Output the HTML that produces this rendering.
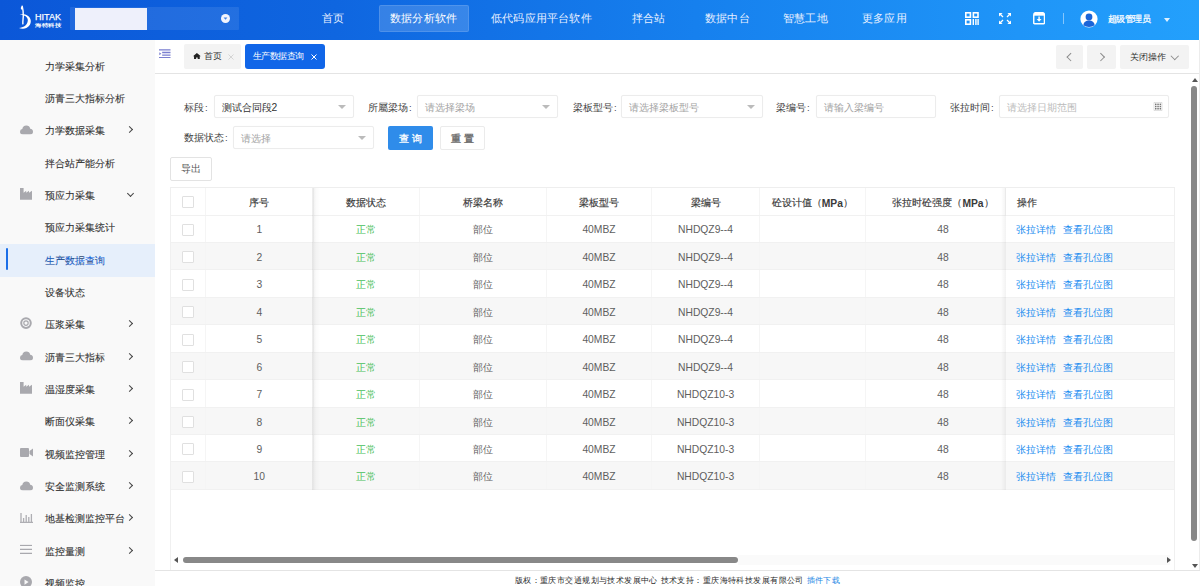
<!DOCTYPE html>
<html><head><meta charset="utf-8">
<style>
*{box-sizing:border-box;margin:0;padding:0}
html,body{width:1200px;height:586px;overflow:hidden;background:#fff;font-family:"Liberation Sans",sans-serif;color:#333}
.abs{position:absolute}
#hdr{position:absolute;left:0;top:0;width:1199px;height:40px;background:linear-gradient(90deg,#0b57d8 0%,#0f66e0 28%,#1680ee 58%,#1f95f8 85%,#23a0fc 100%)}
#side{position:absolute;left:0;top:40px;width:156px;height:546px;background:#f9f9f9;border-right:1px solid #e3e3e3;overflow:hidden}
#tabs{position:absolute;left:155px;top:40px;width:1045px;height:34px;background:#fff;border-bottom:1px solid #e4e4e4}
#main{position:absolute;left:155px;top:74px;width:1045px;height:496px;background:#fff}
#foot{position:absolute;left:155px;top:570px;width:1045px;height:16px;background:#fff;border-top:1px solid #e4e4e4;font-size:8.4px;letter-spacing:0.42px;color:#2a2a2a;text-align:center;line-height:18px;padding-left:0;white-space:nowrap}
.nav{position:absolute;top:0;height:40px;line-height:37px;color:#e8f0ff;font-size:11.3px;letter-spacing:0.2px;white-space:nowrap}
.mi{position:absolute;left:0;width:155px;height:32.33px;font-size:10px;color:#333;line-height:32px}
.mi span.t{position:absolute;left:45px;top:0.5px;-webkit-text-stroke:0.1px #333}
.mi .arr{position:absolute;left:127px;top:12.5px;width:5px;height:5px;border-right:1.5px solid #444;border-bottom:1.5px solid #444;transform:rotate(-45deg)}
.lbl{position:absolute;font-size:9.5px;color:#444;line-height:12px;white-space:nowrap}
.lbl b{font-weight:normal;margin-left:1px}
.inp{position:absolute;height:23px;border:1px solid #ececec;border-radius:2px;background:#fff;font-size:9.5px;color:#a3a3a3;line-height:23.5px;padding-left:6.5px;box-shadow:0 0 1px rgba(0,0,0,0.04);white-space:nowrap}
.inp .dd{position:absolute;right:7px;top:9px;width:0;height:0;border-left:4px solid transparent;border-right:4px solid transparent;border-top:4px solid #bbb}

.mi .ic{position:absolute;left:20px;top:50%;transform:translateY(-66%)}
.mi.act{background:#e6effb;color:#1a6ee8}
.mi.act:before{content:"";position:absolute;left:5.5px;top:4px;width:2px;height:22px;background:#1a6ee8;border-radius:1px}
.mi .arr.dn{left:128px;top:11px;transform:rotate(45deg)}

.row{position:absolute;left:0;width:1005px;border-bottom:1px solid #f1f1f1}
.row.odd{background:#f7f7f7}
.row.hd{color:#444;font-weight:500}
.cell{position:absolute;top:0;height:100%;padding-top:2px;border-right:1px solid #f5f5f5;text-align:center;font-size:9.5px;color:#5e5e5e;display:flex;align-items:center;justify-content:center;white-space:nowrap}
.hd .cell{color:#3a3a3a;padding-top:3px;-webkit-text-stroke:0.15px #3a3a3a}
.cell.lk{justify-content:flex-start;color:#1a8cf0}
.hd .cell[style*="text-align:left"]{justify-content:flex-start}
.hd .cb{position:relative;top:-1.5px}
.hd .cell .m{font-size:10.3px;font-weight:bold;-webkit-text-stroke:0;position:relative;top:-0.3px}
.cell.ok{color:#48c05a}
.cell{padding-top:4.5px}
.cell .n{font-size:10.3px;position:relative;top:-1px}
.hd .cell{padding-top:5px}
.row:not(.hd) .cb{position:relative;top:-1px}

.cb{display:block;width:12px;height:12px;border:1px solid #e0e0e0;border-radius:1px;background:#fff}
table{border-collapse:collapse;table-layout:fixed}
</style></head><body>
<div id="hdr">
  <!-- logo -->
  <div class="abs" style="left:70px;top:7px;width:169px;height:23px;background:rgba(255,255,255,0.09);border-radius:1px"></div>
  <div class="abs" style="left:75px;top:8px;width:72px;height:22px;background:#eef0fb"></div>
  <svg class="abs" style="left:220.6px;top:14.2px" width="9" height="9" viewBox="0 0 9 9"><circle cx="4.5" cy="4.5" r="4.5" fill="#f2f5fd"/><path d="M2.6 3.6 H6.4 L4.5 5.8Z" fill="#3d7fe6"/></svg>
  <div class="nav" style="left:322px">首页</div>
  <div class="abs" style="left:379px;top:5px;width:90px;height:27px;background:rgba(255,255,255,0.16);border-radius:2px;border:1px solid rgba(255,255,255,0.12)"></div>
  <div class="nav" style="left:390px;color:#fff">数据分析软件</div>
  <div class="nav" style="left:491px">低代码应用平台软件</div>
  <div class="nav" style="left:632px">拌合站</div>
  <div class="nav" style="left:705px">数据中台</div>
  <div class="nav" style="left:783px">智慧工地</div>
  <div class="nav" style="left:862px">更多应用</div>
  <div class="nav" style="left:1107.5px;top:0.5px;font-size:9px;letter-spacing:-0.4px;-webkit-text-stroke:0.25px #fff;color:#fff">超级管理员</div>
  <svg class="abs" style="left:17px;top:5px" width="48" height="27" viewBox="0 0 48 27">
    <path d="M5.2 1.2 C5.9 4 6.4 7 6.3 11 C6.2 14 5.6 16.5 5.9 18.8" stroke="#fff" stroke-width="1.4" fill="none" stroke-linecap="round"/>
    <path d="M5 1 C3.6 2.3 3.3 3.6 4.6 4.8 C5.6 3.8 5.8 2.4 5 1Z" fill="#fff"/>
    <path d="M2.6 9.6 C7 8.4 12.8 10 13.7 15 C14.5 19.6 11 23.6 6 23.7 C4.6 23.8 3 23.5 2 23 C6.2 22.6 10.4 20.4 10.8 15.8 C11.1 12 7.6 10.1 2.6 9.6Z" fill="#fff"/>
    <text x="18" y="15.4" font-family="Liberation Sans" font-size="9.6" stroke="#fff" stroke-width="0.25" fill="#fff" textLength="26" lengthAdjust="spacingAndGlyphs">HITAK</text>
    <text x="18" y="21.8" font-size="5" fill="#fff" font-weight="bold" textLength="26" lengthAdjust="spacingAndGlyphs">海特科技</text>
  </svg>
  <svg class="abs" style="left:965px;top:12px" width="14" height="13" viewBox="0 0 14 13">
    <g fill="none" stroke="#fff" stroke-width="1.6"><rect x="0.8" y="0.8" width="4.6" height="4.4"/><rect x="8.4" y="0.8" width="4.6" height="4.4"/><rect x="0.8" y="7.8" width="4.6" height="4.4"/></g>
    <g fill="#fff"><rect x="7.6" y="7" width="1.4" height="6"/><rect x="10.2" y="7" width="1.4" height="6"/><rect x="12.4" y="7" width="1.4" height="6"/></g>
  </svg>
  <svg class="abs" style="left:999px;top:13px" width="12" height="11" viewBox="0 0 12 11">
    <g fill="#fff"><path d="M0 0 H3.6 L0 3.6Z"/><path d="M12 0 H8.4 L12 3.6Z"/><path d="M0 11 H3.6 L0 7.4Z"/><path d="M12 11 H8.4 L12 7.4Z"/></g>
    <g stroke="#fff" stroke-width="1.3"><path d="M1 1 L4 4"/><path d="M11 1 L8 4"/><path d="M1 10 L4 7"/><path d="M11 10 L8 7"/></g>
  </svg>
  <svg class="abs" style="left:1032.8px;top:12.3px" width="12.2" height="12.6" viewBox="0 0 13 13" preserveAspectRatio="none">
    <path d="M0.8 3.2 Q0.8 0.6 3.4 0.6 H9.6 Q12.2 0.6 12.2 3.2 V11.3 Q12.2 12.2 11.3 12.2 H1.7 Q0.8 12.2 0.8 11.3 Z" fill="none" stroke="#fff" stroke-width="1.5"/>
    <rect x="1" y="1" width="11" height="2.8" fill="#fff"/>
    <path d="M6.5 4.6 V8" stroke="#fff" stroke-width="1.5"/>
    <path d="M3.9 7.1 H9.1 L6.5 10.1Z" fill="#fff"/>
  </svg>
  <div class="abs" style="left:1062.5px;top:13px;width:1px;height:11px;background:rgba(255,255,255,0.45)"></div>
  <svg class="abs" style="left:1080px;top:10px" width="18" height="18" viewBox="0 0 18 18">
    <circle cx="9" cy="9" r="8.6" fill="#fff"/>
    <circle cx="9" cy="7" r="3.4" fill="#1a64d8"/>
    <path d="M3.3 15.2 Q4 10.6 9 10.6 Q14 10.6 14.7 15.2 Q12.3 17 9 17 Q5.7 17 3.3 15.2Z" fill="#1a64d8"/>
  </svg>
  <div class="abs" style="left:1164px;top:17.5px;width:0;height:0;border-left:3.5px solid transparent;border-right:3.5px solid transparent;border-top:4px solid rgba(255,255,255,0.85)"></div>

</div>
<div id="side">
<div class="mi" style="top:10.30px"><span class="t">力学采集分析</span></div>
<div class="mi" style="top:42.63px"><span class="t">沥青三大指标分析</span></div>
<div class="mi" style="top:74.96px"><svg class="ic" width="13" height="10" viewBox="0 0 13 10"><path d="M3 10 Q0 10 0 7.3 Q0 5 2.3 4.7 Q2.8 1 6.3 1 Q9.6 1 10.2 4.3 Q13 4.6 13 7.3 Q13 10 10 10 Z" fill="#a9a9ae"/></svg><span class="t">力学数据采集</span><i class="arr"></i></div>
<div class="mi" style="top:107.29px"><span class="t">拌合站产能分析</span></div>
<div class="mi" style="top:139.62px"><svg class="ic" width="12" height="12" viewBox="0 0 12 12"><path d="M0 0 H3.6 V4.6 L6.2 2.6 V4.6 L9 2.6 V4.6 L12 2.6 V11.6 H0 Z" fill="#a9a9ae"/></svg><span class="t">预应力采集</span><i class="arr dn"></i></div>
<div class="mi" style="top:171.95px"><span class="t">预应力采集统计</span></div>
<div class="mi act" style="top:204.28px"><span class="t">生产数据查询</span></div>
<div class="mi" style="top:236.61px"><span class="t">设备状态</span></div>
<div class="mi" style="top:268.94px"><svg class="ic" width="12" height="12" viewBox="0 0 12 12"><circle cx="6" cy="6" r="4.8" fill="none" stroke="#a9a9ae" stroke-width="2"/><circle cx="6" cy="6" r="2.2" fill="none" stroke="#a9a9ae" stroke-width="1.2"/></svg><span class="t">压浆采集</span><i class="arr"></i></div>
<div class="mi" style="top:301.27px"><svg class="ic" width="13" height="10" viewBox="0 0 13 10"><path d="M3 10 Q0 10 0 7.3 Q0 5 2.3 4.7 Q2.8 1 6.3 1 Q9.6 1 10.2 4.3 Q13 4.6 13 7.3 Q13 10 10 10 Z" fill="#a9a9ae"/></svg><span class="t">沥青三大指标</span><i class="arr"></i></div>
<div class="mi" style="top:333.60px"><svg class="ic" width="12" height="12" viewBox="0 0 12 12"><path d="M0 0 H3.6 V4.6 L6.2 2.6 V4.6 L9 2.6 V4.6 L12 2.6 V11.6 H0 Z" fill="#a9a9ae"/></svg><span class="t">温湿度采集</span><i class="arr"></i></div>
<div class="mi" style="top:365.93px"><span class="t">断面仪采集</span><i class="arr"></i></div>
<div class="mi" style="top:398.26px"><svg class="ic" width="13" height="10" viewBox="0 0 13 10"><rect x="0" y="0.5" width="9" height="9" rx="1" fill="#a9a9ae"/><path d="M9.5 3.5 L13 1 V9 L9.5 6.5Z" fill="#a9a9ae"/></svg><span class="t">视频监控管理</span><i class="arr"></i></div>
<div class="mi" style="top:430.59px"><svg class="ic" width="13" height="10" viewBox="0 0 13 10"><path d="M3 10 Q0 10 0 7.3 Q0 5 2.3 4.7 Q2.8 1 6.3 1 Q9.6 1 10.2 4.3 Q13 4.6 13 7.3 Q13 10 10 10 Z" fill="#a9a9ae"/></svg><span class="t">安全监测系统</span><i class="arr"></i></div>
<div class="mi" style="top:462.92px"><svg class="ic" width="13" height="12" viewBox="0 0 13 12"><path d="M1 2 V11 M3.6 7 V11 M6.2 4 V11 M8.8 6 V11 M11.4 3 V11 M0 11.4 H13" stroke="#aeaeb3" stroke-width="1.3"/></svg><span class="t">地基检测监控平台</span><i class="arr"></i></div>
<div class="mi" style="top:495.25px"><svg class="ic" width="12" height="10" viewBox="0 0 12 10"><path d="M0 1 H12 M0 5 H12 M0 9 H12" stroke="#a9a9ae" stroke-width="1.4"/></svg><span class="t">监控量测</span><i class="arr"></i></div>
<div class="mi" style="top:527.58px"><svg class="ic" width="12" height="12" viewBox="0 0 12 12"><circle cx="6" cy="6" r="6" fill="#a9a9ae"/><path d="M4.5 3.3 L8.6 6 L4.5 8.7Z" fill="#f8f8f8"/></svg><span class="t">视频监控</span></div>
</div>
<div id="tabs">
  <svg class="abs" style="left:4.3px;top:8.8px" width="11.5" height="9.6" viewBox="0 0 12 10" preserveAspectRatio="none"><path d="M0 0.9 H12 M3.3 3.6 H12 M3.3 6.4 H12 M0 9.1 H12" stroke="#7a7ed0" stroke-width="1.5"/><path d="M0.3 3.4 L2.4 5 L0.3 6.6Z" fill="#7a7ed0"/></svg>
  <div class="abs" style="left:29px;top:4px;width:57px;height:25px;background:#f3f3f3;border-radius:2px"></div>
  <svg class="abs" style="left:37.8px;top:12.5px" width="7.8" height="6.6" viewBox="0 0 9 8" preserveAspectRatio="none"><path d="M4.5 0 L9 4 H7.8 V8 H5.4 V5.5 H3.6 V8 H1.2 V4 H0 Z" fill="#222"/></svg>
  <div class="abs" style="left:49px;top:4px;font-size:9px;letter-spacing:-0.5px;line-height:25px;color:#333">首页</div>
  <svg class="abs" style="left:73px;top:14px" width="6" height="6" viewBox="0 0 6 6"><path d="M0.5 0.5 L5.5 5.5 M5.5 0.5 L0.5 5.5" stroke="#d0d0d0" stroke-width="0.9"/></svg>
  <div class="abs" style="left:90px;top:4px;width:80px;height:25px;background:#1166e8;border-radius:3px"></div>
  <div class="abs" style="left:98px;top:4px;font-size:9px;letter-spacing:-0.55px;line-height:25px;color:#fff">生产数据查询</div>
  <svg class="abs" style="left:155.5px;top:14px" width="6" height="6" viewBox="0 0 6 6"><path d="M0.5 0.5 L5.5 5.5 M5.5 0.5 L0.5 5.5" stroke="#fff" stroke-width="1"/></svg>
  <div class="abs" style="left:900.5px;top:4.5px;width:27px;height:24px;background:#f3f3f3;border-radius:2px"></div>
  <div class="abs" style="left:932px;top:4.5px;width:29px;height:24px;background:#f3f3f3;border-radius:2px"></div>
  <div class="abs" style="left:965px;top:4.5px;width:69px;height:24px;background:#f3f3f3;border-radius:2px"></div>
  <div class="abs" style="left:912.5px;top:14px;width:5.5px;height:5.5px;border-left:1.5px solid #8a8a8a;border-bottom:1.5px solid #8a8a8a;transform:rotate(45deg)"></div>
  <div class="abs" style="left:942.5px;top:14px;width:5.5px;height:5.5px;border-right:1.5px solid #8a8a8a;border-top:1.5px solid #8a8a8a;transform:rotate(45deg)"></div>
  <div class="abs" style="left:975px;top:4.5px;font-size:9px;letter-spacing:-0.1px;line-height:25px;color:#333">关闭操作</div>
  <div class="abs" style="left:1016.5px;top:12.5px;width:5.5px;height:5.5px;border-right:1.3px solid #8a8a8a;border-bottom:1.3px solid #8a8a8a;transform:rotate(45deg)"></div>
</div>
<div id="main">
</div>

<div class="lbl" style="left:184px;top:102px">标段<b>:</b></div>
<div class="inp" style="left:214px;top:95px;width:140px;color:#333">测试合同段<span style="font-size:10.3px">2</span><i class="dd"></i></div>
<div class="lbl" style="left:368px;top:102px">所屬梁场<b>:</b></div>
<div class="inp" style="left:417px;top:95px;width:141px">请选择梁场<i class="dd"></i></div>
<div class="lbl" style="left:573px;top:102px">梁板型号<b>:</b></div>
<div class="inp" style="left:621px;top:95px;width:142px">请选择梁板型号<i class="dd"></i></div>
<div class="lbl" style="left:776px;top:102px">梁编号<b>:</b></div>
<div class="inp" style="left:816px;top:95px;width:120px">请输入梁编号</div>
<div class="lbl" style="left:950px;top:102px">张拉时间<b>:</b></div>
<div class="inp" style="left:999px;top:95px;width:170px;color:#bbb">请选择日期范围
<svg style="position:absolute;right:5px;top:6px" width="10" height="9" viewBox="0 0 9 9"><path d="M0.5 0.5H8.5V8.5H0.5Z" fill="none" stroke="#ccc" stroke-width="0.6"/><g fill="#777"><rect x="1.5" y="1.6" width="1.5" height="1.5"/><rect x="3.8" y="1.6" width="1.5" height="1.5"/><rect x="6.1" y="1.6" width="1.5" height="1.5"/><rect x="1.5" y="3.8" width="1.5" height="1.5"/><rect x="3.8" y="3.8" width="1.5" height="1.5"/><rect x="6.1" y="3.8" width="1.5" height="1.5"/><rect x="1.5" y="6" width="1.5" height="1.5"/><rect x="3.8" y="6" width="1.5" height="1.5"/><rect x="6.1" y="6" width="1.5" height="1.5"/></g></svg></div>
<div class="lbl" style="left:184px;top:132px">数据状态<b>:</b></div>
<div class="inp" style="left:233px;top:126px;width:141px">请选择<i class="dd"></i></div>
<div class="abs" style="left:388px;top:126px;width:45px;height:24px;background:#2f8cea;border-radius:2px;color:#fff;font-size:9.5px;line-height:26px;text-align:center;-webkit-text-stroke:0.3px #fff">查 询</div>
<div class="abs" style="left:440px;top:126px;width:45px;height:24px;background:#fff;border:1px solid #e3e3e3;border-radius:2px;color:#6a6a6a;font-size:9.5px;line-height:24px;text-align:center;-webkit-text-stroke:0.35px #6a6a6a;border-color:#ebebeb">重 置</div>
<div class="abs" style="left:170px;top:157px;width:42px;height:24px;background:#fff;border:1px solid #e3e3e3;border-radius:2px;color:#555;font-size:9.5px;line-height:22px;text-align:center">导出</div>

<div id="tbl" class="abs" style="left:170px;top:187px;width:1005px;height:383px;border-top:1px solid #eeeeee;border-left:1px solid #f0f0f0;border-right:1px solid #f0f0f0;background:#fff;overflow:hidden">
<div class="row hd" style="top:0;height:27.5px">
<div class="cell" style="left:0px;width:35px"><i class="cb"></i></div>
<div class="cell" style="left:35px;width:107.5px">序号</div>
<div class="cell" style="left:142.5px;width:106.5px">数据状态</div>
<div class="cell" style="left:249px;width:126.75px">桥梁名称</div>
<div class="cell" style="left:375.75px;width:105.5px">梁板型号</div>
<div class="cell" style="left:481.25px;width:107.5px">梁编号</div>
<div class="cell" style="left:588.75px;width:106.25px">砼设计值（<span class="m">MPa</span>）</div>
<div class="cell" style="left:695px;width:140px;padding-left:15px">张拉时砼强度（<span class="m">MPa</span>）</div>
<div class="cell" style="left:835px;width:170px;text-align:left;padding-left:11px">操作</div>
</div>
<div class="row" style="top:27.50px;height:27.44px">
<div class="cell" style="left:0px;width:35px"><i class="cb"></i></div>
<div class="cell" style="left:35px;width:107.5px"><span class="n">1</span></div>
<div class="cell ok" style="left:142.5px;width:106.5px">正常</div>
<div class="cell" style="left:249px;width:126.75px">部位</div>
<div class="cell" style="left:375.75px;width:105.5px" ><span class="n">40MBZ</span></div>
<div class="cell" style="left:481.25px;width:107.5px" ><span class="n">NHDQZ9--4</span></div>
<div class="cell" style="left:588.75px;width:106.25px"></div>
<div class="cell" style="left:695px;width:154px;border-right:none"><span class="n">48</span></div>
<div class="cell lk" style="left:835px;width:170px;text-align:left;padding-left:10px">张拉详情<span style="margin-left:7px">查看孔位图</span></div>
</div>
<div class="row odd" style="top:54.94px;height:27.44px">
<div class="cell" style="left:0px;width:35px"><i class="cb"></i></div>
<div class="cell" style="left:35px;width:107.5px"><span class="n">2</span></div>
<div class="cell ok" style="left:142.5px;width:106.5px">正常</div>
<div class="cell" style="left:249px;width:126.75px">部位</div>
<div class="cell" style="left:375.75px;width:105.5px" ><span class="n">40MBZ</span></div>
<div class="cell" style="left:481.25px;width:107.5px" ><span class="n">NHDQZ9--4</span></div>
<div class="cell" style="left:588.75px;width:106.25px"></div>
<div class="cell" style="left:695px;width:154px;border-right:none"><span class="n">48</span></div>
<div class="cell lk" style="left:835px;width:170px;text-align:left;padding-left:10px">张拉详情<span style="margin-left:7px">查看孔位图</span></div>
</div>
<div class="row" style="top:82.38px;height:27.44px">
<div class="cell" style="left:0px;width:35px"><i class="cb"></i></div>
<div class="cell" style="left:35px;width:107.5px"><span class="n">3</span></div>
<div class="cell ok" style="left:142.5px;width:106.5px">正常</div>
<div class="cell" style="left:249px;width:126.75px">部位</div>
<div class="cell" style="left:375.75px;width:105.5px" ><span class="n">40MBZ</span></div>
<div class="cell" style="left:481.25px;width:107.5px" ><span class="n">NHDQZ9--4</span></div>
<div class="cell" style="left:588.75px;width:106.25px"></div>
<div class="cell" style="left:695px;width:154px;border-right:none"><span class="n">48</span></div>
<div class="cell lk" style="left:835px;width:170px;text-align:left;padding-left:10px">张拉详情<span style="margin-left:7px">查看孔位图</span></div>
</div>
<div class="row odd" style="top:109.82px;height:27.44px">
<div class="cell" style="left:0px;width:35px"><i class="cb"></i></div>
<div class="cell" style="left:35px;width:107.5px"><span class="n">4</span></div>
<div class="cell ok" style="left:142.5px;width:106.5px">正常</div>
<div class="cell" style="left:249px;width:126.75px">部位</div>
<div class="cell" style="left:375.75px;width:105.5px" ><span class="n">40MBZ</span></div>
<div class="cell" style="left:481.25px;width:107.5px" ><span class="n">NHDQZ9--4</span></div>
<div class="cell" style="left:588.75px;width:106.25px"></div>
<div class="cell" style="left:695px;width:154px;border-right:none"><span class="n">48</span></div>
<div class="cell lk" style="left:835px;width:170px;text-align:left;padding-left:10px">张拉详情<span style="margin-left:7px">查看孔位图</span></div>
</div>
<div class="row" style="top:137.26px;height:27.44px">
<div class="cell" style="left:0px;width:35px"><i class="cb"></i></div>
<div class="cell" style="left:35px;width:107.5px"><span class="n">5</span></div>
<div class="cell ok" style="left:142.5px;width:106.5px">正常</div>
<div class="cell" style="left:249px;width:126.75px">部位</div>
<div class="cell" style="left:375.75px;width:105.5px" ><span class="n">40MBZ</span></div>
<div class="cell" style="left:481.25px;width:107.5px" ><span class="n">NHDQZ9--4</span></div>
<div class="cell" style="left:588.75px;width:106.25px"></div>
<div class="cell" style="left:695px;width:154px;border-right:none"><span class="n">48</span></div>
<div class="cell lk" style="left:835px;width:170px;text-align:left;padding-left:10px">张拉详情<span style="margin-left:7px">查看孔位图</span></div>
</div>
<div class="row odd" style="top:164.70px;height:27.44px">
<div class="cell" style="left:0px;width:35px"><i class="cb"></i></div>
<div class="cell" style="left:35px;width:107.5px"><span class="n">6</span></div>
<div class="cell ok" style="left:142.5px;width:106.5px">正常</div>
<div class="cell" style="left:249px;width:126.75px">部位</div>
<div class="cell" style="left:375.75px;width:105.5px" ><span class="n">40MBZ</span></div>
<div class="cell" style="left:481.25px;width:107.5px" ><span class="n">NHDQZ9--4</span></div>
<div class="cell" style="left:588.75px;width:106.25px"></div>
<div class="cell" style="left:695px;width:154px;border-right:none"><span class="n">48</span></div>
<div class="cell lk" style="left:835px;width:170px;text-align:left;padding-left:10px">张拉详情<span style="margin-left:7px">查看孔位图</span></div>
</div>
<div class="row" style="top:192.14px;height:27.44px">
<div class="cell" style="left:0px;width:35px"><i class="cb"></i></div>
<div class="cell" style="left:35px;width:107.5px"><span class="n">7</span></div>
<div class="cell ok" style="left:142.5px;width:106.5px">正常</div>
<div class="cell" style="left:249px;width:126.75px">部位</div>
<div class="cell" style="left:375.75px;width:105.5px" ><span class="n">40MBZ</span></div>
<div class="cell" style="left:481.25px;width:107.5px" ><span class="n">NHDQZ10-3</span></div>
<div class="cell" style="left:588.75px;width:106.25px"></div>
<div class="cell" style="left:695px;width:154px;border-right:none"><span class="n">48</span></div>
<div class="cell lk" style="left:835px;width:170px;text-align:left;padding-left:10px">张拉详情<span style="margin-left:7px">查看孔位图</span></div>
</div>
<div class="row odd" style="top:219.58px;height:27.44px">
<div class="cell" style="left:0px;width:35px"><i class="cb"></i></div>
<div class="cell" style="left:35px;width:107.5px"><span class="n">8</span></div>
<div class="cell ok" style="left:142.5px;width:106.5px">正常</div>
<div class="cell" style="left:249px;width:126.75px">部位</div>
<div class="cell" style="left:375.75px;width:105.5px" ><span class="n">40MBZ</span></div>
<div class="cell" style="left:481.25px;width:107.5px" ><span class="n">NHDQZ10-3</span></div>
<div class="cell" style="left:588.75px;width:106.25px"></div>
<div class="cell" style="left:695px;width:154px;border-right:none"><span class="n">48</span></div>
<div class="cell lk" style="left:835px;width:170px;text-align:left;padding-left:10px">张拉详情<span style="margin-left:7px">查看孔位图</span></div>
</div>
<div class="row" style="top:247.02px;height:27.44px">
<div class="cell" style="left:0px;width:35px"><i class="cb"></i></div>
<div class="cell" style="left:35px;width:107.5px"><span class="n">9</span></div>
<div class="cell ok" style="left:142.5px;width:106.5px">正常</div>
<div class="cell" style="left:249px;width:126.75px">部位</div>
<div class="cell" style="left:375.75px;width:105.5px" ><span class="n">40MBZ</span></div>
<div class="cell" style="left:481.25px;width:107.5px" ><span class="n">NHDQZ10-3</span></div>
<div class="cell" style="left:588.75px;width:106.25px"></div>
<div class="cell" style="left:695px;width:154px;border-right:none"><span class="n">48</span></div>
<div class="cell lk" style="left:835px;width:170px;text-align:left;padding-left:10px">张拉详情<span style="margin-left:7px">查看孔位图</span></div>
</div>
<div class="row odd" style="top:274.46px;height:27.44px">
<div class="cell" style="left:0px;width:35px"><i class="cb"></i></div>
<div class="cell" style="left:35px;width:107.5px"><span class="n">10</span></div>
<div class="cell ok" style="left:142.5px;width:106.5px">正常</div>
<div class="cell" style="left:249px;width:126.75px">部位</div>
<div class="cell" style="left:375.75px;width:105.5px" ><span class="n">40MBZ</span></div>
<div class="cell" style="left:481.25px;width:107.5px" ><span class="n">NHDQZ10-3</span></div>
<div class="cell" style="left:588.75px;width:106.25px"></div>
<div class="cell" style="left:695px;width:154px;border-right:none"><span class="n">48</span></div>
<div class="cell lk" style="left:835px;width:170px;text-align:left;padding-left:10px">张拉详情<span style="margin-left:7px">查看孔位图</span></div>
</div>
<div class="abs" style="left:141px;top:0;width:8px;height:301.90000000000003px;background:linear-gradient(90deg,rgba(0,0,0,0.08),rgba(0,0,0,0.02) 50%,rgba(0,0,0,0))"></div>
<div class="abs" style="left:830px;top:0;width:5px;height:301.90000000000003px;background:linear-gradient(270deg,rgba(0,0,0,0.05),rgba(0,0,0,0))"></div>
</div>

<div class="abs" style="left:183px;top:557px;width:555px;height:5.5px;background:#888;border-radius:3px"></div>
<div class="abs" style="left:174px;top:556.5px;width:0;height:0;border-top:3px solid transparent;border-bottom:3px solid transparent;border-right:4px solid #555"></div>
<div class="abs" style="left:738px;top:555px;width:432px;height:10px;background:#fafafa"></div>
<div class="abs" style="left:1167px;top:556.5px;width:0;height:0;border-top:3px solid transparent;border-bottom:3px solid transparent;border-left:4px solid #555"></div>
<div class="abs" style="left:1191.3px;top:86px;width:6px;height:455px;background:#888;border-radius:3px"></div>
<div class="abs" style="left:1199px;top:40px;width:1px;height:546px;background:#ececec"></div>
<div class="abs" style="left:1191.5px;top:78px;width:0;height:0;border-left:3px solid transparent;border-right:3px solid transparent;border-bottom:4px solid #555"></div>
<div class="abs" style="left:1191.5px;top:564px;width:0;height:0;border-left:3px solid transparent;border-right:3px solid transparent;border-top:4px solid #555"></div>
<div id="foot">版权：重庆市交通规划与技术发展中心 技术支持：重庆海特科技发展有限公司 <span style="color:#1e88e5">插件下载</span></div>
</body></html>
